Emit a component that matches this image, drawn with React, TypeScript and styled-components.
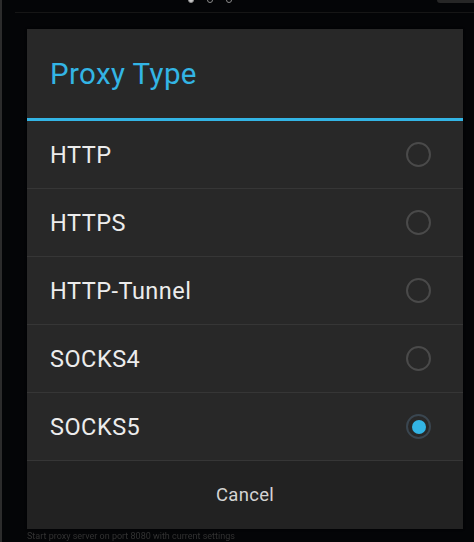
import styled, { createGlobalStyle } from "styled-components";

const GlobalStyle = createGlobalStyle`
  html, body {
    margin: 0;
    padding: 0;
    background: #000;
  }
  body {
    font-family: Roboto, "Liberation Sans", sans-serif;
  }
`;

const Screen = styled.div`
  width: 474px;
  height: 542px;
  overflow: hidden;
  background: #040507;
  border-left: 2px solid #2c2c2c;
  box-sizing: border-box;
  display: flex;
  flex-direction: column;

  & > * {
    flex-shrink: 0;
  }
`;

const TopStrip = styled.div`
  height: 29px;
  display: flex;
  flex-direction: column;
`;

const TopRow = styled.div`
  height: 10px;
  display: flex;
  align-items: flex-start;
`;

const Dots = styled.div`
  display: flex;
  gap: 13px;
  margin-top: -3px;
  margin-left: 186px;
`;

const Dot = styled.span<{ $filled?: boolean }>`
  width: 6px;
  height: 6px;
  border-radius: 50%;
  box-sizing: border-box;
  border: 1.5px solid #8a8a8a;
  background: ${(p) => (p.$filled ? "#c8c8c8" : "transparent")};
`;

const CornerBar = styled.div`
  margin-left: auto;
  width: 37px;
  height: 3px;
  background: #262626;
  border-bottom-left-radius: 3px;
`;

const Rule = styled.div`
  margin: 2px 0 0 13px;
  height: 1px;
  background: #161616;
`;

const Dialog = styled.div`
  margin-left: 25px;
  width: 436px;
  background: #282828;
  display: flex;
  flex-direction: column;
  box-shadow: 0 0 2px rgba(0, 0, 0, 0.8);
`;

const Title = styled.div`
  height: 92px;
  display: flex;
  align-items: center;
  padding-left: 23px;
  padding-top: 1px;
  box-sizing: border-box;
  color: #33b5e5;
  font-size: 29.5px;
  letter-spacing: 0.4px;
  border-bottom: 3px solid #33b5e5;
`;

const Option = styled.div`
  height: 68px;
  display: flex;
  align-items: center;
  justify-content: space-between;
  padding: 0 32px 0 23px;
  box-sizing: border-box;
  border-bottom: 1px solid #363636;
  color: #ececec;
  font-size: 23.5px;
  letter-spacing: 0.5px;
`;

const Radio = styled.span<{ $checked?: boolean }>`
  width: 25px;
  height: 25px;
  border-radius: 50%;
  box-sizing: border-box;
  border: 2px solid ${(p) => (p.$checked ? "#3a4650" : "#4a4a4a")};
  display: flex;
  align-items: center;
  justify-content: center;

  &::after {
    content: "";
    display: ${(p) => (p.$checked ? "block" : "none")};
    width: 14px;
    height: 14px;
    border-radius: 50%;
    background: #33b5e5;
  }
`;

const CancelButton = styled.div`
  height: 68px;
  display: flex;
  align-items: center;
  justify-content: center;
  background: #222;
  color: #d4d4d4;
  font-size: 18.5px;
  letter-spacing: 0.3px;
`;

const Behind = styled.div`
  margin: 3px 0 0 25px;
  color: #333;
  font-size: 9px;
  line-height: 9px;
  white-space: nowrap;
  filter: blur(0.5px);
`;

const options = ["HTTP", "HTTPS", "HTTP-Tunnel", "SOCKS4", "SOCKS5"];
const selected = "SOCKS5";

export default function App() {
  return (
    <>
      <GlobalStyle />
      <Screen>
        <TopStrip>
          <TopRow>
            <Dots>
              <Dot $filled />
              <Dot />
              <Dot />
            </Dots>
            <CornerBar />
          </TopRow>
          <Rule />
        </TopStrip>
        <Dialog>
          <Title>Proxy Type</Title>
          {options.map((o) => (
            <Option key={o}>
              <span>{o}</span>
              <Radio $checked={o === selected} />
            </Option>
          ))}
          <CancelButton>Cancel</CancelButton>
        </Dialog>
        <Behind>Start proxy server on port 8080 with current settings</Behind>
      </Screen>
    </>
  );
}
